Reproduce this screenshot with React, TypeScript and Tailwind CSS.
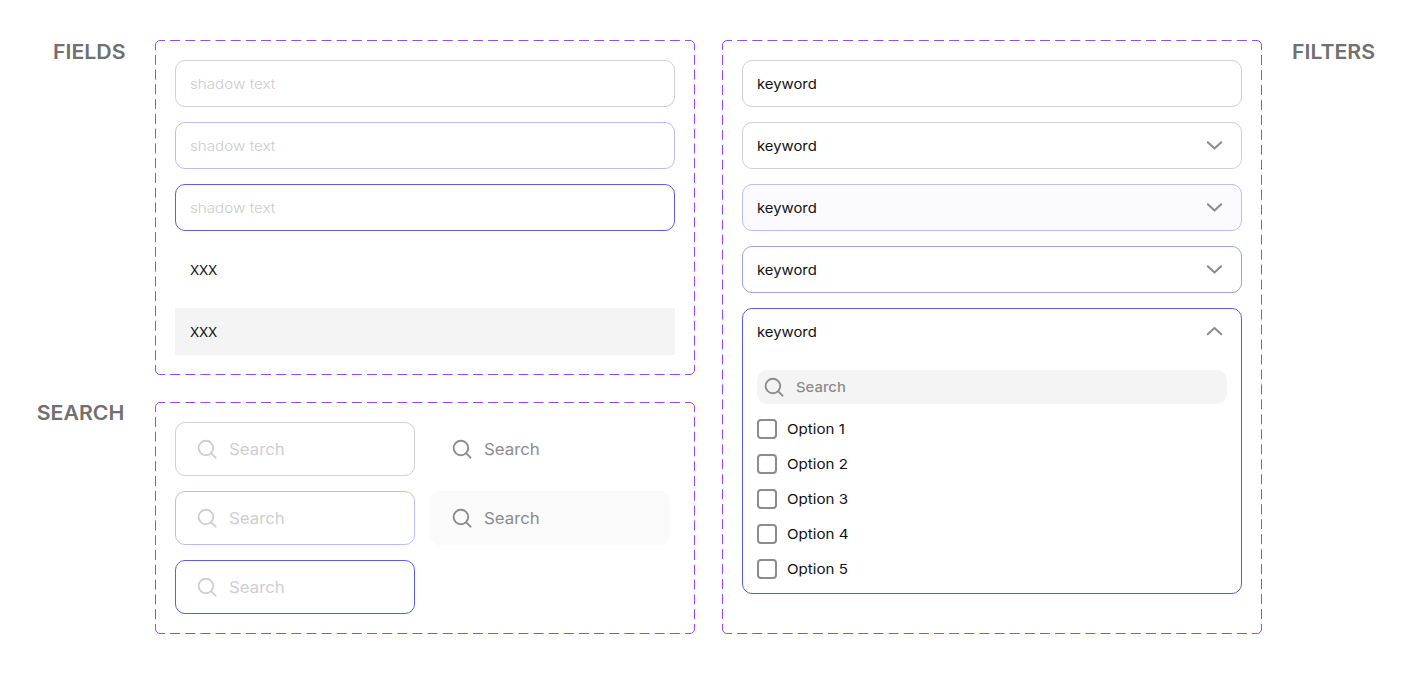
import type { ReactNode } from "react";

const R = 4.5;

function dash(length: number) {
  const gap = length / Math.round(length / 15) - 10;
  return `10 ${gap}`;
}

function DashedFrame({ width, height }: { width: number; height: number }) {
  const r = width - 0.5;
  const b = height - 0.5;
  const across = dash(width - 10);
  const down = dash(height - 10);
  return (
    <svg
      className="pointer-events-none absolute inset-0"
      width={width}
      height={height}
      fill="none"
      stroke="#9747ff"
      aria-hidden="true"
    >
      <path d={`M5 .5H${width - 5}`} strokeDasharray={across} strokeDashoffset={5} />
      <path d={`M5 ${b}H${width - 5}`} strokeDasharray={across} strokeDashoffset={5} />
      <path d={`M.5 5V${height - 5}`} strokeDasharray={down} strokeDashoffset={5} />
      <path d={`M${r} 5V${height - 5}`} strokeDasharray={down} strokeDashoffset={5} />
      <path
        d={`M.5 5a${R} ${R} 0 0 1 ${R} -${R}M${width - 5} .5a${R} ${R} 0 0 1 ${R} ${R}M${r} ${height - 5}a${R} ${R} 0 0 1 -${R} ${R}M5 ${b}a${R} ${R} 0 0 1 -${R} -${R}`}
      />
    </svg>
  );
}

function SearchIcon() {
  return (
    <svg className="size-6 shrink-0" viewBox="0 0 24 24" fill="none" stroke="currentColor" strokeWidth="1.9" strokeLinecap="round">
      <circle cx="10.9" cy="11" r="7.3" />
      <path d="m16.2 16.3 4.4 4.4" />
    </svg>
  );
}

function Chevron({ up = false }: { up?: boolean }) {
  return (
    <svg className="size-[25px] shrink-0 text-[#8c8c8c]" viewBox="0 0 25 25" fill="none" stroke="currentColor" strokeWidth="2" strokeLinecap="round" strokeLinejoin="round">
      <path d={up ? "m5.8 15.3 6.7-6.3 6.7 6.3" : "m5.8 9.3 6.7 6.3 6.7-6.3"} />
    </svg>
  );
}

function Field({ tone, children }: { tone: string; children: ReactNode }) {
  return (
    <div className={`flex h-[47px] items-center justify-between px-3.5 text-[13.5px] ${tone}`}>{children}</div>
  );
}

function Placeholder() {
  return <span className="origin-left scale-x-[1.125] pt-0.5 font-light text-[#cccccc]">shadow text</span>;
}

function Keyword() {
  return <span className="origin-left scale-x-110 pt-0.5">keyword</span>;
}

function Value() {
  return <span className="pt-0.5 tracking-[-0.2px]">XXX</span>;
}

function SearchBox({ tone }: { tone: string }) {
  return (
    <div className={`flex h-[54px] w-60 items-center gap-2.5 rounded-[10px] border pl-[19px] ${tone}`}>
      <SearchIcon />
      <span className="origin-left scale-x-[1.085] pt-0.5 text-[15.5px]">Search</span>
    </div>
  );
}

function Heading({ className, children }: { className: string; children: ReactNode }) {
  return (
    <h2 className={`scale-x-[1.09] text-[19.5px] leading-6 font-semibold text-[#707070] ${className}`}>{children}</h2>
  );
}

const options = ["Option 1", "Option 2", "Option 3", "Option 4", "Option 5"];

export default function App() {
  return (
    <main className="flex h-[674px] w-[1413px] items-start bg-white pt-10 font-['Inter',sans-serif] text-[#111]">
      <div className="flex w-[695px] flex-col gap-[27px]">
        <section className="flex justify-between">
          <div className="flex w-[125px] justify-end">
            <Heading className="origin-right">FIELDS</Heading>
          </div>
          <div className="relative flex h-[335px] w-[540px] flex-col gap-[15px] p-5">
            <DashedFrame width={540} height={335} />
            <Field tone="rounded-[10px] border border-[#d1d1d1]"><Placeholder /></Field>
            <Field tone="rounded-[10px] border border-[#b9bdf7]"><Placeholder /></Field>
            <Field tone="rounded-[10px] border border-[#5a5fe6]"><Placeholder /></Field>
            <Field tone="border border-transparent"><Value /></Field>
            <Field tone="border border-[#f4f4f4] bg-[#f4f4f4]"><Value /></Field>
          </div>
        </section>
        <section className="flex justify-between">
          <div className="flex w-[124px] justify-end">
            <Heading className="-mt-px origin-right">SEARCH</Heading>
          </div>
          <div className="relative flex h-[232px] w-[540px] gap-[15px] p-5">
            <DashedFrame width={540} height={232} />
            <div className="flex flex-col gap-[15px]">
              <SearchBox tone="border-[#d1d1d1] text-[#cfcfcf]" />
              <SearchBox tone="border-[#b9bdf7] text-[#cfcfcf]" />
              <SearchBox tone="border-[#5a5fe6] text-[#cfcfcf]" />
            </div>
            <div className="flex flex-col gap-[15px]">
              <SearchBox tone="border-transparent text-[#8c8c8c]" />
              <SearchBox tone="border-[#fafafa] bg-[#fafafa] text-[#8c8c8c]" />
            </div>
          </div>
        </section>
      </div>
      <section className="ml-[27px] flex gap-[30px]">
        <div className="relative flex h-[594px] w-[540px] flex-col gap-[15px] p-5">
          <DashedFrame width={540} height={594} />
          <Field tone="rounded-[10px] border border-[#d1d1d1]"><Keyword /></Field>
          <Field tone="rounded-[10px] border border-[#d1d1d1]"><Keyword /><Chevron /></Field>
          <Field tone="rounded-[10px] border border-[#b9bdf7] bg-[#fafaff]"><Keyword /><Chevron /></Field>
          <Field tone="rounded-[10px] border border-[#9ca1f2]"><Keyword /><Chevron /></Field>
          <div className="h-[286px] rounded-[10px] border border-[#5a5fe6]">
            <div className="-mt-px"><Field tone=""><Keyword /><Chevron up /></Field></div>
            <div className="mx-3.5 mt-[15px] flex h-[34px] items-center gap-2.5 rounded-[10px] bg-[#f4f4f4] pl-[5px] text-[#8c8c8c]">
              <SearchIcon />
              <span className="origin-left scale-x-110 text-[13.5px] font-medium">Search</span>
            </div>
            <ul className="mx-3.5 mt-[15px] flex flex-col gap-[15px]">
              {options.map((option) => (
                <li key={option} className="flex h-5 items-center gap-2.5 text-[13.5px]">
                  <span className="size-5 rounded-[4px] border-2 border-[#8c8c8c]" />
                  <span className="origin-left scale-x-[1.12]">{option}</span>
                </li>
              ))}
            </ul>
          </div>
        </div>
        <Heading className="origin-left">FILTERS</Heading>
      </section>
    </main>
  );
}
